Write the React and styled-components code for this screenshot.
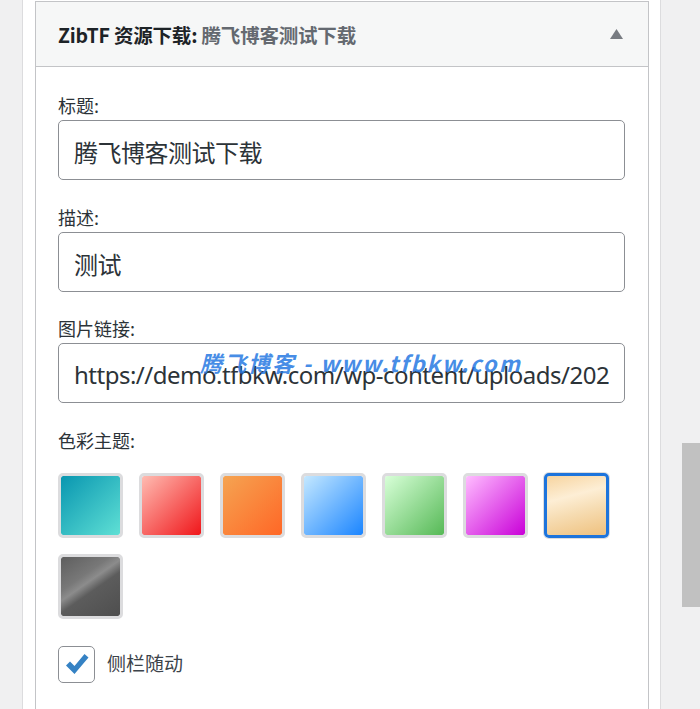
import React from "react";
import styled, { createGlobalStyle } from "styled-components";

const GlobalStyle = createGlobalStyle`
  body {
    margin: 0;
    background: #f0f0f1;
    font-family: "Noto Sans", "Noto Sans CJK SC", sans-serif;
    overflow: hidden;
  }
`;

const Page = styled.div`
  display: flex;
  padding-left: 22px;
  height: 709px;
`;

const Column = styled.div`
  width: 614px;
  padding: 1px 11px 0 12px;
  background: #fff;
  border-left: 1px solid #dcdcde;
  border-right: 1px solid #dcdcde;
`;

const Panel = styled.section`
  border: 1px solid #c3c4c7;
  border-bottom: none;
  height: 100%;
  box-sizing: border-box;
`;

const Header = styled.header`
  display: flex;
  align-items: center;
  justify-content: space-between;
  height: 64px;
  padding: 0 25px 0 22px;
  background: #f6f7f7;
  border-bottom: 1px solid #c3c4c7;
`;

const Title = styled.h3`
  margin: 0;
  font-size: 19.5px;
  font-weight: 700;
  color: #1d2327;
  letter-spacing: -0.2px;
  font-family: "Noto Sans CJK SC", sans-serif;
`;

const TitleSub = styled.span`
  color: #646970;
`;

const Toggle = styled.button`
  border: none;
  background: none;
  padding: 0;
  display: flex;
  cursor: pointer;
`;

const Body = styled.div`
  padding: 26px 23px 0 22px;
`;

const Field = styled.div`
  position: relative;
  margin-bottom: 24.5px;
`;

const Label = styled.label`
  display: block;
  font-size: 18px;
  line-height: 24px;
  margin-bottom: 3px;
  color: #2c3338;
  font-family: "Noto Sans CJK SC", sans-serif;
`;

const Input = styled.input`
  display: block;
  box-sizing: border-box;
  width: 100%;
  height: 60px;
  padding: 3px 15px 0;
  border: 1px solid #8c8f94;
  border-radius: 5px;
  font-family: "Noto Sans", "Noto Sans CJK SC", sans-serif;
  font-size: 24px;
  letter-spacing: -0.5px;
  color: #2c3338;
  background: #fff;
  outline: none;
`;

const Watermark = styled.span`
  position: absolute;
  left: 142px;
  top: 31px;
  font-family: "Noto Sans CJK SC", sans-serif;
  font-size: 22px;
  line-height: 30px;
  font-weight: 700;
  font-style: italic;
  color: rgba(38, 120, 226, 0.85);
  letter-spacing: 2px;
  pointer-events: none;
  white-space: nowrap;
`;

const Swatches = styled.div`
  display: flex;
  flex-wrap: wrap;
  gap: 16px;
  margin: 21px 0 27px;
`;

const Swatch = styled.button`
  box-sizing: border-box;
  width: 65px;
  height: 65px;
  padding: 0;
  border: 3px solid ${(p) => (p.$active ? "#1d74dc" : "#dcdcde")};
  box-shadow: ${(p) => (p.$active ? "0 0 0 1px #dcdcde" : "none")};
  border-radius: 5px;
  background: ${(p) => p.$bg};
  background-clip: padding-box;
  cursor: pointer;
`;

const CheckRow = styled.label`
  display: flex;
  align-items: center;
  gap: 12px;
  font-size: 19px;
  line-height: 24px;
  color: #3c434a;
  font-family: "Noto Sans CJK SC", sans-serif;
`;

const CheckBox = styled.span`
  box-sizing: border-box;
  width: 37px;
  height: 37px;
  border: 1px solid #8c8f94;
  border-radius: 5px;
  display: flex;
  align-items: center;
  justify-content: center;
  background: #fff;
`;

const CheckText = styled.span`
  margin-top: -2px;
`;

const ScrollThumb = styled.div`
  position: fixed;
  right: 0;
  top: 443px;
  width: 18px;
  height: 164px;
  background: #c1c1c1;
`;

const themes = [
  "linear-gradient(135deg, #0996b0 0%, #5fe0d5 100%)",
  "linear-gradient(135deg, #ffbcb2 0%, #f0161a 100%)",
  "linear-gradient(135deg, #f5a452 0%, #ff6726 100%)",
  "linear-gradient(135deg, #c4e8ff 0%, #1b85ff 100%)",
  "linear-gradient(135deg, #d8ffd8 0%, #56b956 100%)",
  "linear-gradient(135deg, #ffbdff 0%, #c900d8 100%)",
  "linear-gradient(165deg, #f7d49f 0%, #fdeed5 35%, #f6dcb2 60%, #efc17e 100%)",
  "linear-gradient(145deg, #5e5e5e 0%, #787878 34%, #8c8c8c 44%, #5c5c5c 56%, #4e4e4e 100%)",
];

export default function App() {
  return (
    <>
      <GlobalStyle />
      <Page>
        <Column>
          <Panel>
            <Header>
              <Title>
                ZibTF 资源下载: <TitleSub>腾飞博客测试下载</TitleSub>
              </Title>
              <Toggle aria-label="toggle">
                <svg width="13" height="10" viewBox="0 0 13 10">
                  <polygon points="6.5,0 13,10 0,10" fill="#787c82" />
                </svg>
              </Toggle>
            </Header>
            <Body>
              <Field>
                <Label>标题:</Label>
                <Input defaultValue="腾飞博客测试下载" />
              </Field>
              <Field>
                <Label>描述:</Label>
                <Input defaultValue="测试" />
              </Field>
              <Field>
                <Label>图片链接:</Label>
                <Input defaultValue="https://demo.tfbkw.com/wp-content/uploads/2024/01/download.jpg" />
                <Watermark>腾飞博客 - www.tfbkw.com</Watermark>
              </Field>
              <Label>色彩主题:</Label>
              <Swatches>
                {themes.map((bg, i) => (
                  <Swatch key={i} $bg={bg} $active={i === 6} />
                ))}
              </Swatches>
              <CheckRow>
                <CheckBox>
                  <svg width="26" height="24" viewBox="0 0 26 24">
                    <path
                      d="M2 13.5 L6 9.5 L10.5 14 L20.5 2 L24.5 5.5 L10.5 22 Z"
                      fill="#3582c4"
                    />
                  </svg>
                </CheckBox>
                <CheckText>侧栏随动</CheckText>
              </CheckRow>
            </Body>
          </Panel>
        </Column>
      </Page>
      <ScrollThumb />
    </>
  );
}
